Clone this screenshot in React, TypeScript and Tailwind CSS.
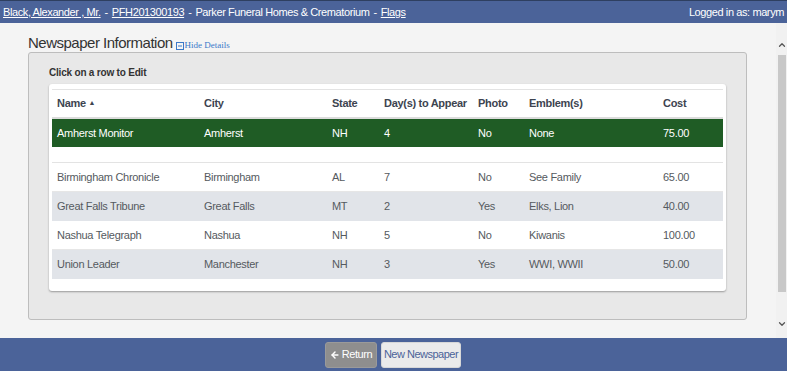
import { ArrowLeft, ChevronUp, ChevronDown } from 'lucide-react';

type Row = {
    name: string;
    city: string;
    state: string;
    days: string;
    photo: string;
    emblems: string;
    cost: string;
};

const rows: Row[] = [
    { name: 'Birmingham Chronicle', city: 'Birmingham', state: 'AL', days: '7', photo: 'No', emblems: 'See Family', cost: '65.00' },
    { name: 'Great Falls Tribune', city: 'Great Falls', state: 'MT', days: '2', photo: 'Yes', emblems: 'Elks, Lion', cost: '40.00' },
    { name: 'Nashua Telegraph', city: 'Nashua', state: 'NH', days: '5', photo: 'No', emblems: 'Kiwanis', cost: '100.00' },
    { name: 'Union Leader', city: 'Manchester', state: 'NH', days: '3', photo: 'Yes', emblems: 'WWI, WWII', cost: '50.00' },
];

const cols = 'grid grid-cols-[147px_128px_52px_94px_51px_134px_1fr] items-center pl-[5px] whitespace-nowrap';

function DataRow({ row, striped }: { row: Row; striped: boolean }) {
    return (
        <div className={`${cols} h-[29px] text-[11px] tracking-[-0.3px] text-[#555a60] ${striped ? 'bg-[#e1e4e9]' : 'bg-white border-b border-[#e6e6e6]'}`}>
            <span>{row.name}</span>
            <span>{row.city}</span>
            <span>{row.state}</span>
            <span>{row.days}</span>
            <span>{row.photo}</span>
            <span>{row.emblems}</span>
            <span>{row.cost}</span>
        </div>
    );
}

export default function App() {
    return (
        <div className="w-[787px] h-[371px] flex flex-col bg-[#f4f4f4] font-['Liberation_Sans',Arial,sans-serif]">
            {/* top bar */}
            <div className="h-[23px] bg-[#4b6399] border-t border-[#2e3f60] flex items-center justify-between px-[3px] text-[11px] tracking-[-0.4px] text-white whitespace-nowrap">
                <div className="flex items-center gap-[4px]">
                    <span className="underline">Black, Alexander , Mr.</span>
                    <span>-</span>
                    <span className="underline">PFH201300193</span>
                    <span>-</span>
                    <span>Parker Funeral Homes &amp; Crematorium</span>
                    <span>-</span>
                    <span className="underline">Flags</span>
                </div>
                <span>Logged in as: marym</span>
            </div>

            <div className="flex-1 flex min-h-0">
                <div className="flex-1 pl-[28px] pr-[29px] pt-[9px]">
                    <div className="flex items-end gap-[3px] h-[20px]">
                        <h1 className="text-[15px] leading-[18px] tracking-[-0.5px] text-[#333]">Newspaper Information</h1>
                        <span className="flex items-center gap-[1px] text-[9px] text-[#3b79c9] font-['Liberation_Serif',serif] leading-[12px] mb-[1px]">
                            <svg width="8" height="8" viewBox="0 0 8 8" className="mt-[1px]">
                                <rect x="0.5" y="0.5" width="7" height="7" fill="none" stroke="#3b79c9" />
                                <line x1="2" y1="4" x2="6" y2="4" stroke="#3b79c9" />
                            </svg>
                            Hide Details
                        </span>
                    </div>

                    <div className="h-[268px] border border-[#bdbdbd] rounded-[3px] bg-[#e8e8e8] px-[20px] pt-[14px]">
                        <div className="text-[10px] font-bold tracking-[-0.2px] text-[#333] leading-[12px] mb-[5px]">Click on a row to Edit</div>
                        <div className="bg-white rounded-[3px] shadow-[0_1px_2px_rgba(0,0,0,0.35)] px-[3px] pt-[5px] h-[207px]">
                            <div className={`${cols} h-[30px] border-t border-[#e3e3e3] border-b-2 border-b-[#dcdcdc] text-[11px] tracking-[-0.3px] font-bold text-[#3d4450]`}>
                                <span>Name <span className="text-[7px] align-[2px]">▲</span></span>
                                <span>City</span>
                                <span>State</span>
                                <span>Day(s) to Appear</span>
                                <span>Photo</span>
                                <span>Emblem(s)</span>
                                <span>Cost</span>
                            </div>
                            <div className={`${cols} h-[28px] bg-[#1f5c25] text-[11px] tracking-[-0.3px] text-white`}>
                                <span>Amherst Monitor</span>
                                <span>Amherst</span>
                                <span>NH</span>
                                <span>4</span>
                                <span>No</span>
                                <span>None</span>
                                <span>75.00</span>
                            </div>
                            <div className="h-[15px] border-b border-[#e3e3e3] mt-[1px]" />
                            {rows.map((r, i) => (
                                <DataRow key={r.name} row={r} striped={i % 2 === 1} />
                            ))}
                        </div>
                    </div>
                </div>

                {/* scrollbar */}
                <div className="w-[11px] flex flex-col items-center bg-[#f1f1f1] pt-[17px] pb-[9px]">
                    <ChevronUp size={10} strokeWidth={3} className="text-[#555]" />
                    <div className="w-[8px] mt-[5px] h-[237px] bg-[#c8c8c8]" />
                    <div className="flex-1" />
                    <ChevronDown size={10} strokeWidth={3} className="text-[#555]" />
                </div>
            </div>

            {/* bottom bar */}
            <div className="h-[33px] bg-[#4b6399] flex items-center justify-center gap-[4px] pr-[1px] whitespace-nowrap">
                <button className="h-[26px] w-[52px] rounded-[3px] bg-[#8e8e8e] border border-[#9a9a9a] text-white text-[11px] tracking-[-0.4px] flex items-center justify-center gap-[2px]">
                    <ArrowLeft size={10} strokeWidth={3.5} />
                    Return
                </button>
                <button className="h-[26px] w-[80px] rounded-[3px] bg-[#ebebeb] border border-[#d8d8d8] text-[#4b6399] text-[11px] tracking-[-0.5px]">
                    New Newspaper
                </button>
            </div>
        </div>
    );
}
